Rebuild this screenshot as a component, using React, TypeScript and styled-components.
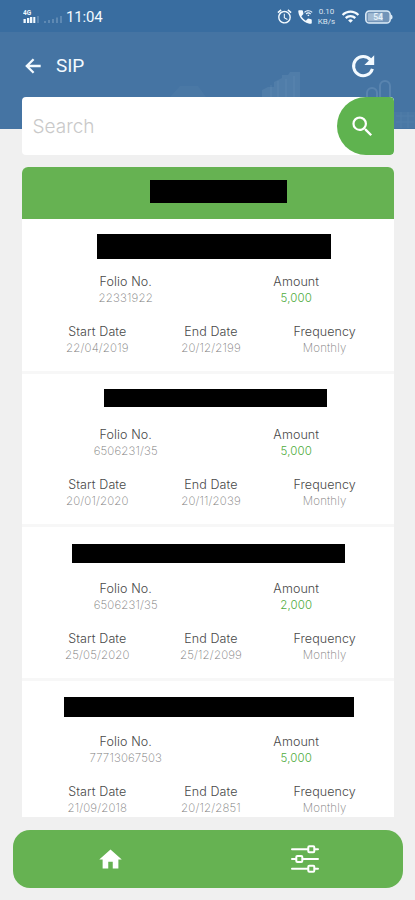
import React from 'react';
import styled, { createGlobalStyle } from 'styled-components';
import { MdAlarm, MdHome, MdSearch, MdWifi, MdWifiCalling3 } from 'react-icons/md';

const GlobalStyle = createGlobalStyle`
  *, *::before, *::after { box-sizing: border-box; }
  html, body { margin: 0; padding: 0; }
  body { background: #f0f0f0; font-family: Inter, Roboto, sans-serif; overflow: hidden; }
`;

const Screen = styled.div`
  display: flex;
  flex-direction: column;
  width: 415px;
  height: 900px;
  overflow: hidden;
  background: #f0f0f0;
`;

const Header = styled.header`
  position: relative;
  display: flex;
  flex-direction: column;
  flex: none;
  height: 129px;
  background: #4574a3;
  color: #f3faff;
`;

const Skyline = styled.svg`
  position: absolute;
  inset: 0;
  width: 415px;
  height: 129px;
`;

const StatusBar = styled.div`
  position: relative;
  display: flex;
  align-items: center;
  justify-content: space-between;
  height: 32px;
  padding: 1px 22px 0 23px;
  background: #396da0;
`;

const StatusGroup = styled.div`
  display: flex;
  align-items: center;
`;

const StatusIcon = styled.span<{ $gap: number }>`
  display: flex;
  margin-right: ${(p) => p.$gap}px;
`;

const Clock = styled.span`
  margin-left: 3px;
  font: 400 15px/18px Roboto, sans-serif;
  letter-spacing: -0.15px;
`;

const NetSpeed = styled.span`
  width: 19px;
  margin-right: 5px;
  font: 400 8px/10px Roboto, sans-serif;
  text-align: center;
  opacity: 0.85;
`;

const AppBar = styled.div`
  position: relative;
  display: flex;
  align-items: center;
  height: 65px;
  padding: 2px 39px 0 22px;
`;

const Title = styled.h1`
  flex: 1;
  margin: 0 0 0 12px;
  font: 400 19px/24px Roboto, sans-serif;
  letter-spacing: -0.1px;
`;

const SearchBox = styled.div`
  position: relative;
  display: flex;
  align-items: center;
  justify-content: space-between;
  flex: none;
  height: 58px;
  margin: -32px 21px 0 21.5px;
  border-radius: 4px;
  background: #fff;
  overflow: hidden;
`;

const Placeholder = styled.span`
  padding-left: 11px;
  color: #c9c9c9;
  font-size: 19px;
  font-weight: 300;
`;

const SearchButton = styled.button`
  display: flex;
  align-items: center;
  width: 57.5px;
  height: 58px;
  padding: 0 0 0 12px;
  border: 0;
  border-radius: 29px 4px 4px 29px;
  background: #5fb34f;
  color: #fff;
`;

const Card = styled.main`
  display: flex;
  flex-direction: column;
  flex: none;
  height: 650px;
  margin: 12px 21px 0 21.5px;
  border-radius: 6px 6px 0 0;
  background: #fff;
  overflow: hidden;
`;

const CardHeader = styled.div`
  display: flex;
  flex: none;
  justify-content: center;
  height: 51.5px;
  margin-bottom: 1.5px;
  padding: 13px 0 0 21px;
  background: #66b252;
`;

const Redaction = styled.div<{ $width: number; $height: number; $shift?: number }>`
  width: ${(p) => p.$width}px;
  height: ${(p) => p.$height}px;
  margin-left: ${(p) => p.$shift ?? 0}px;
  background: #000;
`;

const Entry = styled.section`
  flex: none;
  height: 153.5px;
  padding: 0 12.5px 0 19px;
  border-bottom: 3px solid #f7f7f7;
`;

const NameArea = styled.div<{ $top: number }>`
  display: flex;
  justify-content: center;
  height: 52.6px;
  padding-top: ${(p) => p.$top}px;
`;

const FieldRow = styled.div<{ $columns: number }>`
  display: grid;
  grid-template-columns: repeat(${(p) => p.$columns}, 1fr);
  height: 50px;
  text-align: center;
`;

const Label = styled.div`
  color: #484848;
  font-size: 12.5px;
  font-weight: 300;
  line-height: 17px;
  letter-spacing: 0.1px;
`;

const Value = styled.div<{ $green?: boolean }>`
  color: ${(p) => (p.$green ? '#4fac40' : '#7c7c7c')};
  font-size: 11.5px;
  font-weight: ${(p) => (p.$green ? 300 : 200)};
  line-height: 16px;
  letter-spacing: 0.15px;
`;

const BottomNav = styled.nav`
  display: grid;
  grid-template-columns: 194px 196px;
  flex: none;
  height: 58px;
  margin: 13px 12px 0 13px;
  border-radius: 17px;
  background: #66b252;
  color: #fff;
`;

const NavItem = styled.a`
  display: flex;
  align-items: center;
  justify-content: center;
`;

type Sip = {
  folio: string;
  amount: string;
  start: string;
  end: string;
  bar: { top: number; width: number; height: number; shift: number };
};

const sips: Sip[] = [
  { folio: '22331922', amount: '5,000', start: '22/04/2019', end: '20/12/2199', bar: { top: 14, width: 234, height: 25, shift: 6 } },
  { folio: '6506231/35', amount: '5,000', start: '20/01/2020', end: '20/11/2039', bar: { top: 15.5, width: 223, height: 18, shift: 9 } },
  { folio: '6506231/35', amount: '2,000', start: '25/05/2020', end: '25/12/2099', bar: { top: 17, width: 273, height: 19, shift: -6 } },
  { folio: '77713067503', amount: '5,000', start: '21/09/2018', end: '20/12/2851', bar: { top: 16.5, width: 290, height: 20, shift: -4 } },
];

const Field = ({ label, value, green }: { label: string; value: string; green?: boolean }) => (
  <div>
    <Label>{label}</Label>
    <Value $green={green}>{value}</Value>
  </div>
);

const SignalIcon = () => (
  <svg width="40" height="18" viewBox="0 0 40 18" fill="currentColor">
    <text x="0" y="7" fontSize="6.5" fontWeight="700" fontFamily="Roboto, sans-serif">4G</text>
    <path d="M0.5 11h2.3v4H.5zM4 10h2.3v5H4zM7 9h2.3v6H7zM10.3 9h2v6h-2z" />
    <path d="M14 8h2v7h-2zM21 13h2v2h-2zM25 12h2v3h-2zM29 11h2v4h-2zM33 9.5h2V15h-2zM37 8h2v7h-2z" opacity=".2" />
  </svg>
);

const BatteryIcon = () => (
  <svg width="28" height="14" viewBox="0 0 28 14">
    <rect x=".8" y="1" width="24.4" height="12" rx="3.6" fill="#7294b8" stroke="#dcebf7" strokeWidth="1.5" />
    <path d="M26 4.5q1.6.5 1.6 2.5T26 9.5z" fill="#dcebf7" />
    <path d="M3 3.2h15v7.6H3z" fill="#c9d9e8" opacity=".55" />
    <text x="13" y="10.2" fontSize="8.5" fontWeight="500" textAnchor="middle" fill="#e8f3fb" fontFamily="Roboto, sans-serif">54</text>
  </svg>
);

const BackIcon = () => (
  <svg width="22" height="22" viewBox="0 0 22 22" fill="none" stroke="currentColor" strokeWidth="2.3">
    <path d="M18.7 11H5M11.6 4.2L4.8 11l6.8 6.8" />
  </svg>
);

const ReloadIcon = () => (
  <svg width="26" height="26" viewBox="0 0 26 26">
    <path d="M20.6 7A9.6 9.6 0 1 0 22.4 15.8" fill="none" stroke="currentColor" strokeWidth="3" />
    <path d="M24.2 2.2v9.8h-9.8z" fill="currentColor" />
  </svg>
);

const SlidersIcon = () => (
  <svg width="28" height="30" viewBox="0 0 28 30" fill="none" stroke="currentColor" strokeWidth="2" strokeLinecap="round">
    <path d="M1 5.3h16M24 5.3h3M1 15h4M12 15h15M1 24.7h16M24 24.7h3" />
    <rect x="17.3" y="2.3" width="6" height="6" rx="1" />
    <rect x="5.3" y="12" width="6" height="6" rx="1" />
    <rect x="17.3" y="21.7" width="6" height="6" rx="1" />
  </svg>
);

export default function App() {
  return (
    <>
      <GlobalStyle />
      <Screen>
        <Header>
          <Skyline viewBox="0 0 415 129" fill="#a9c6df">
            <path d="M262 97v-7l6-3h6v-5l8-4v-3h6l2-3h10v25z" opacity=".11" />
            <path d="M271 97V85M278 97V81M286 97V79M294 97V76" stroke="#a9c6df" strokeWidth="2" opacity=".06" />
            <path d="M367 97v-4a5 5 0 0 1 10 0v4M380 97V86a5 5 0 0 1 10 0v11" fill="none" stroke="#a9c6df" strokeWidth="2" opacity=".2" />
            <path d="M394 112h21v16h-21zM170 97l10-11h18l8 11z" opacity=".05" />
            <path d="M396 116h18M396 122h18M401 112v16M408 112v16" stroke="#a9c6df" opacity=".08" />
          </Skyline>
          <StatusBar>
            <StatusGroup>
              <SignalIcon />
              <Clock>11:04</Clock>
            </StatusGroup>
            <StatusGroup>
              <StatusIcon $gap={3}>
                <MdAlarm size={17} />
              </StatusIcon>
              <StatusIcon $gap={3}>
                <MdWifiCalling3 size={18} />
              </StatusIcon>
              <NetSpeed>0.10 KB/s</NetSpeed>
              <StatusIcon $gap={5}>
                <MdWifi size={19} />
              </StatusIcon>
              <BatteryIcon />
            </StatusGroup>
          </StatusBar>
          <AppBar>
            <BackIcon />
            <Title>SIP</Title>
            <ReloadIcon />
          </AppBar>
        </Header>
        <SearchBox>
          <Placeholder>Search</Placeholder>
          <SearchButton aria-label="Search">
            <MdSearch size={27} />
          </SearchButton>
        </SearchBox>
        <Card>
          <CardHeader>
            <Redaction $width={137} $height={23} />
          </CardHeader>
          {sips.map((sip, i) => (
            <Entry key={i}>
              <NameArea $top={sip.bar.top}>
                <Redaction $width={sip.bar.width} $height={sip.bar.height} $shift={sip.bar.shift} />
              </NameArea>
              <FieldRow $columns={2}>
                <Field label="Folio No." value={sip.folio} />
                <Field label="Amount" value={sip.amount} green />
              </FieldRow>
              <FieldRow $columns={3}>
                <Field label="Start Date" value={sip.start} />
                <Field label="End Date" value={sip.end} />
                <Field label="Frequency" value="Monthly" />
              </FieldRow>
            </Entry>
          ))}
        </Card>
        <BottomNav>
          <NavItem aria-label="Home">
            <MdHome size={27} />
          </NavItem>
          <NavItem aria-label="Filters">
            <SlidersIcon />
          </NavItem>
        </BottomNav>
      </Screen>
    </>
  );
}
